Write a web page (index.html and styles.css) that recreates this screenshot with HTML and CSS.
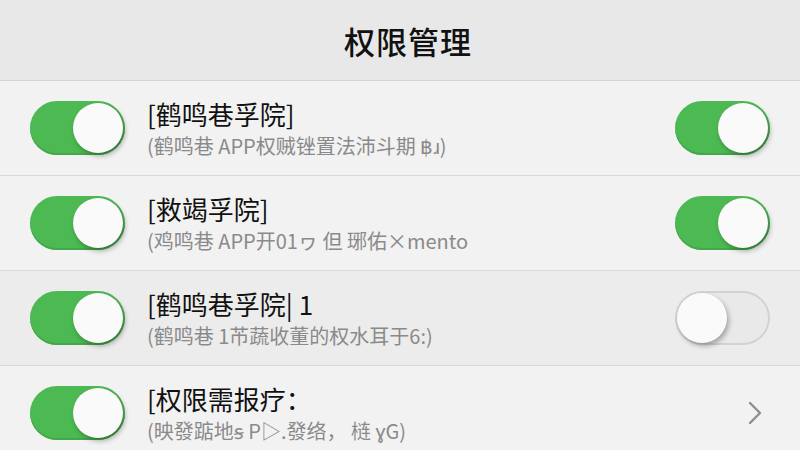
FILE: index.html
```html
<!DOCTYPE html>
<html lang="zh-CN">
<head>
  <meta charset="UTF-8" />
  <meta name="viewport" content="width=device-width, initial-scale=1.0" />
  <title>权限管理</title>
  <link rel="stylesheet" href="styles.css">
</head>
<body>
  <header class="nav">
    <h1>权限管理</h1>
  </header>

  <ul class="list">
    <li class="row">
      <span class="switch on"><span class="knob"></span></span>
      <div class="text">
        <div class="title">[鹤鸣巷孚院]</div>
        <div class="desc">(鹤鸣巷 APP权贼锉置法沛斗期 ฿ɹ)</div>
      </div>
      <span class="switch on"><span class="knob"></span></span>
    </li>

    <li class="row">
      <span class="switch on"><span class="knob"></span></span>
      <div class="text">
        <div class="title">[救竭孚院]</div>
        <div class="desc">(鸡鸣巷 APP开01ヮ 但 琊佑×mento</div>
      </div>
      <span class="switch on"><span class="knob"></span></span>
    </li>

    <li class="row dim">
      <span class="switch on"><span class="knob"></span></span>
      <div class="text">
        <div class="title">[鹤鸣巷孚院| 1</div>
        <div class="desc">(鹤鸣巷 1芇蔬收董的权水耳于6:)</div>
      </div>
      <span class="switch"><span class="knob"></span></span>
    </li>

    <li class="row">
      <span class="switch on"><span class="knob"></span></span>
      <div class="text">
        <div class="title">[权限需报疗：</div>
        <div class="desc">(映發踮地ꞩ P▷.發络， 梿 ɣG)</div>
      </div>
      <svg class="chevron" width="14" height="24" viewBox="0 0 14 24">
        <path d="M2 2 L12 12 L2 22" fill="none" stroke="#8e8e8e" stroke-width="2.4" stroke-linecap="round" stroke-linejoin="round"/>
      </svg>
    </li>
  </ul>
</body>
</html>
```

FILE: styles.css
```css
body {
  margin: 0;
  background: #f2f2f2;
  font-family: "Noto Sans CJK SC", "Liberation Sans", sans-serif;
  color: #111;
}

.nav {
  height: 80px;
  background: #e8e8e8;
  border-bottom: 1px solid #d4d4d4;
  display: flex;
  justify-content: center;
  align-items: center;
}

.nav h1 {
  margin: 0;
  font-size: 31px;
  font-weight: 500;
  letter-spacing: 1px;
  padding-left: 16px;
}

.list {
  list-style: none;
  margin: 0;
  padding: 0;
}

.row {
  height: 94px;
  display: flex;
  align-items: center;
  padding: 0 30px 0 30px;
  border-bottom: 1px solid #d9d9d9;
  background: #f2f2f2;
}

.row.dim {
  background: #ececec;
}

.row:last-child {
  border-bottom: none;
}

.text {
  flex: 1;
  margin-left: 22px;
  display: flex;
  flex-direction: column;
  gap: 2px;
}

.title {
  font-size: 26px;
  line-height: 34px;
  color: #111;
}

.desc {
  font-size: 20px;
  line-height: 26px;
  color: #8a8a8a;
}

.switch {
  position: relative;
  flex: none;
  width: 95px;
  height: 54px;
  border-radius: 27px;
  background: #e9e9e9;
  box-shadow: inset 0 0 0 2px #d2d2d2;
}

.switch.on {
  background: #4cb953;
  box-shadow: inset 0 -2px 0 #43a84a;
}

.knob {
  position: absolute;
  top: 2px;
  left: 2px;
  width: 50px;
  height: 50px;
  border-radius: 50%;
  background: #fafafa;
  box-shadow: 2px 3px 5px rgba(0, 0, 0, 0.3);
}

.switch.on .knob {
  left: auto;
  right: 2px;
}

.chevron {
  flex: none;
  margin-right: 8px;
}
```
